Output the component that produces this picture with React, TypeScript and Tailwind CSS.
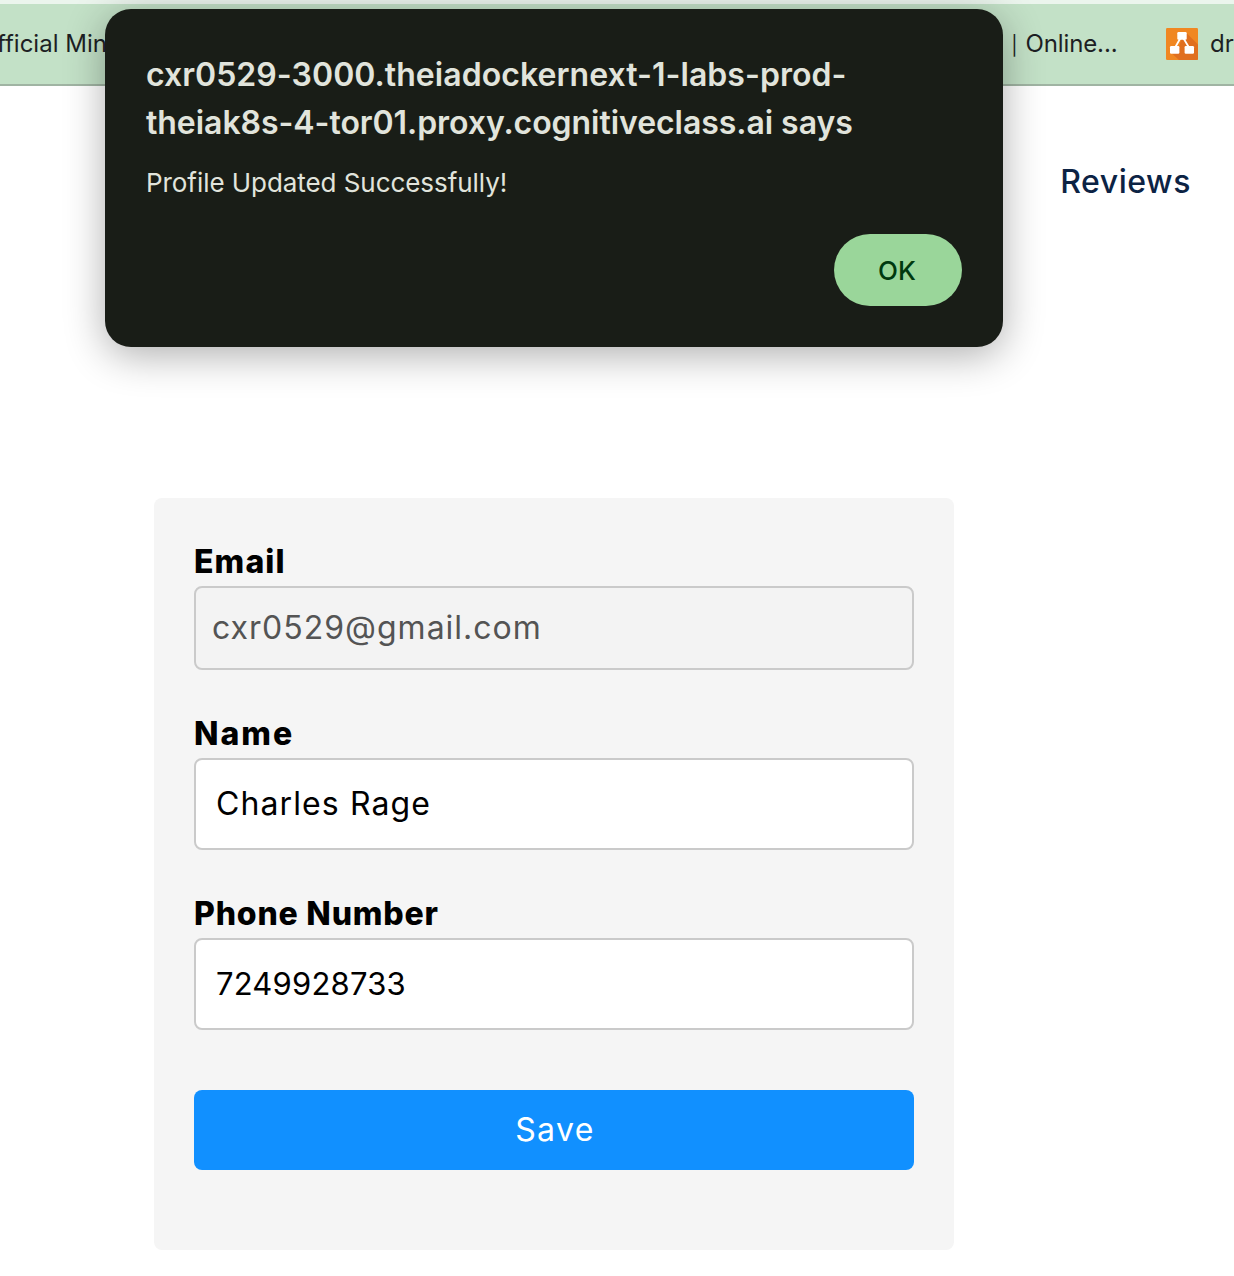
import type { ReactNode } from "react";

function DrawioIcon() {
  return (
    <svg viewBox="0 0 32 32" className="size-8 shrink-0">
      <defs>
        <clipPath id="tile">
          <rect width="32" height="32" rx="1.2" />
        </clipPath>
      </defs>
      <g clipPath="url(#tile)">
        <rect width="32" height="32" fill="#f08722" />
        <path d="M20.5 5 32 16.500V32H13L6 25.500l7-6 2-7.500z" fill="#e06f1f" />
        <path d="M14.500 10 8.800 20M17.300 10l6 10" stroke="#fff" strokeWidth="1.8" fill="none" />
        <rect x="11.300" y="4" width="9.400" height="7.800" rx="1.200" fill="#fff" />
        <rect x="4" y="18" width="9.400" height="7.800" rx="1.200" fill="#fff" />
        <rect x="18.600" y="18" width="9.400" height="7.800" rx="1.200" fill="#fff" />
      </g>
    </svg>
  );
}

function BookmarksBar() {
  return (
    <div className="flex h-[86px] items-center overflow-hidden border-t-4 border-b-2 border-t-[#ebf5ed] border-b-[#a0b4a3] bg-[#c3e1c7] text-2xl whitespace-nowrap text-[#1d1f24]">
      <div className="-ml-[3px] w-[992px] shrink-0">fficial Min</div>
      <div className="w-[177px] shrink-0 tracking-[-0.1px]">
        n <span className="inline-block w-[9px] text-center text-[19px]">|</span> Online...
      </div>
      <DrawioIcon />
      <div className="ml-3 shrink-0">dr</div>
    </div>
  );
}

function Field({ label, labelClass, children }: { label: string; labelClass: string; children: ReactNode }) {
  return (
    <label className="block">
      <span className={`block h-12 text-[32px] leading-[48px] font-extrabold text-black ${labelClass}`}>{label}</span>
      {children}
    </label>
  );
}

export default function App() {
  return (
    <div className="relative h-[1276px] w-[1234px] overflow-hidden bg-white font-['Inter',sans-serif]">
      <BookmarksBar />

      <nav className="flex h-48 justify-end pt-[72px] pr-[43px]">
        <a className="text-[32px] leading-[48px] font-medium tracking-[0.55px] text-[#0c2344]">Reviews</a>
      </nav>

      <main className="mt-[220px] ml-[154px] h-[752px] w-[800px] rounded-lg bg-[#f5f5f5] px-10 pt-10">
        <Field label="Email" labelClass="tracking-[1.1px]">
          <input
            readOnly
            value="cxr0529@gmail.com"
            className="block h-[84px] w-full rounded-lg border-2 border-[#cacaca] bg-[#f3f3f3] px-4 pb-0.5 text-[32px] tracking-[1px] text-[#545454] outline-none"
          />
        </Field>
        <div className="h-10" />
        <Field label="Name" labelClass="tracking-[2px]">
          <input
            readOnly
            value="Charles Rage"
            className="block h-[92px] w-full rounded-lg border-2 border-[#cacaca] bg-white px-5 pb-0.5 text-[32px] tracking-[1.1px] text-black outline-none"
          />
        </Field>
        <div className="h-10" />
        <Field label="Phone Number" labelClass="tracking-[0.8px]">
          <input
            readOnly
            value="7249928733"
            className="block h-[92px] w-full rounded-lg border-2 border-[#cacaca] bg-white px-5 pb-0.5 text-[31px] tracking-[0.2px] text-black outline-none"
          />
        </Field>
        <button className="mt-[60px] block h-20 w-full rounded-lg bg-[#1190ff] pl-0.5 text-[32px] tracking-[1.4px] text-white">
          Save
        </button>
      </main>

      <div
        role="alertdialog"
        className="absolute top-[9px] left-[105px] flex h-[338px] w-[898px] flex-col rounded-[26px] bg-[#191d17] px-[41px] pt-[42px] text-[#e1e4dc] shadow-[0_8px_40px_rgba(0,0,0,0.32)]"
      >
        <h1 className="text-[32px] leading-[48px] font-semibold whitespace-nowrap">
          <span className="tracking-[0.05px]">cxr0529-3000.theiadockernext-1-labs-prod-</span>
          <br />
          <span className="tracking-[-0.05px]">theiak8s-4-tor01.proxy.cognitiveclass.ai says</span>
        </h1>
        <p className="mt-4 text-[26px] leading-10 tracking-[-0.06px]">Profile Updated Successfully!</p>
        <button className="mt-[31px] flex h-[72px] w-32 items-center justify-center self-end rounded-full bg-[#9ad69a] pr-0.5 text-[26px] font-medium text-[#00390f]">
          OK
        </button>
      </div>
    </div>
  );
}
